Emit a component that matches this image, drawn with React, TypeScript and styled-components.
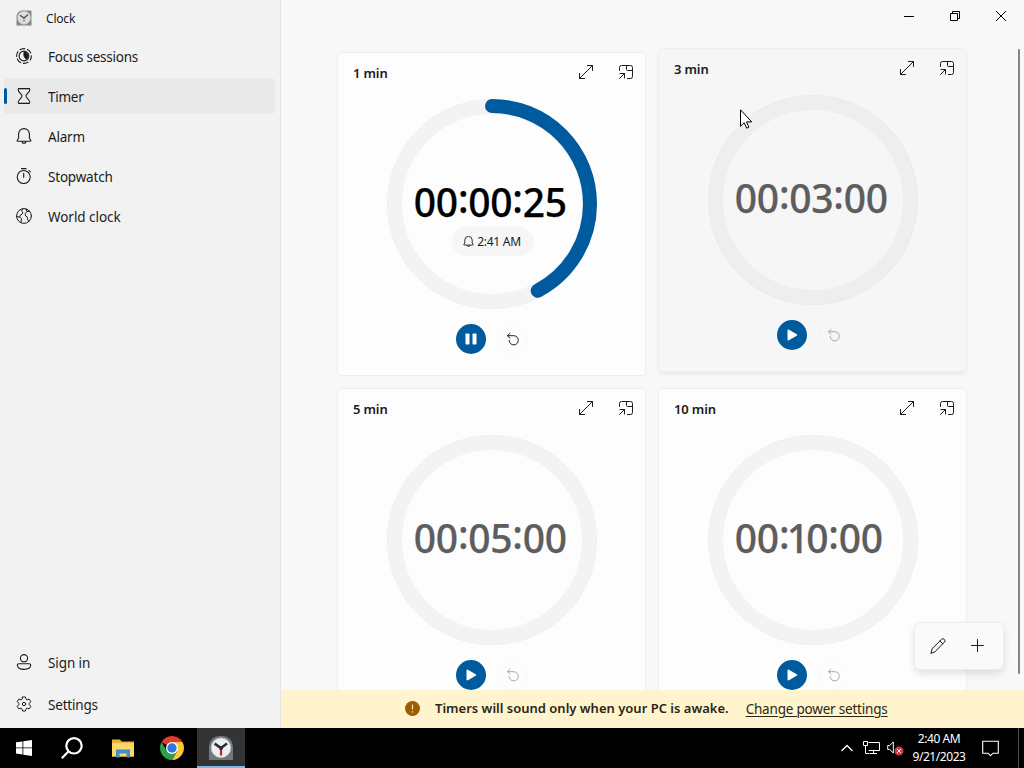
import React from 'react';
import styled, { createGlobalStyle, css } from 'styled-components';

const GlobalStyle = createGlobalStyle`
  * {
    box-sizing: border-box;
  }

  body {
    margin: 0;
    overflow: hidden;
    font-family: 'Noto Sans', 'Open Sans', sans-serif;
    color: #1b1b1b;
  }

  svg {
    display: block;
    flex: none;
  }
`;

const Desktop = styled.div`
  display: flex;
  flex-direction: column;
  width: 1024px;
  height: 768px;
`;

const Window = styled.div`
  display: flex;
  height: 728px;
  background: #f8f8f8;
`;

const Sidebar = styled.aside`
  display: flex;
  flex-direction: column;
  width: 281px;
  padding: 0 5px 6px 4px;
  background: #f2f2f2;
  border-right: 1px solid #e4e4e4;
`;

const AppTitle = styled.div`
  display: flex;
  align-items: center;
  gap: 14px;
  height: 36px;
  padding-left: 12px;
  font-size: 12px;
  letter-spacing: -0.2px;
`;

const NavList = styled.nav`
  display: flex;
  flex-direction: column;
  gap: 4px;
  padding-top: 2px;
`;

const NavFooter = styled(NavList)`
  margin-top: auto;
  gap: 6px;
`;

const NavItem = styled.a<{ $active?: boolean }>`
  display: flex;
  align-items: center;
  height: 36px;
  padding-right: 12px;
  border-radius: 4px;
  background: ${({ $active }) => ($active ? '#e9e9e9' : 'transparent')};

  &::before {
    content: '';
    width: 3px;
    height: 16px;
    margin-right: 9px;
    border-radius: 2px;
    background: ${({ $active }) => ($active ? '#005a9e' : 'transparent')};
  }
`;

const NavLabel = styled.span<{ $spacing: number }>`
  padding-top: 2px;
  margin-left: 16px;
  font-size: 13.5px;
  line-height: 20px;
  letter-spacing: ${({ $spacing }) => $spacing}px;
`;

const Main = styled.main`
  position: relative;
  display: flex;
  flex-direction: column;
  flex: 1;
`;

const TitleBar = styled.div`
  display: flex;
  justify-content: flex-end;
  height: 32px;
`;

const WindowButton = styled.div`
  display: grid;
  place-items: center;
  width: 46px;
  height: 32px;
`;

const Scroller = styled.div`
  display: flex;
  justify-content: space-between;
  height: 658px;
  padding: 17px 4px 0 57px;
  overflow: hidden;
`;

const ScrollThumb = styled.div`
  width: 2px;
  height: 625px;
  border-radius: 1px;
  background: #858585;
`;

const CardGrid = styled.div`
  display: grid;
  grid-template-columns: 307px 307px;
  grid-auto-rows: 322px;
  gap: 14px;
  padding-top: 4px;
`;

const Card = styled.section<{ $hovered?: boolean }>`
  display: flex;
  flex-direction: column;
  align-items: center;
  border-radius: 4px;
  background: #fdfdfd;
  box-shadow: 0 0 0 1px #eeeeee, 0 1px 1px #e4e4e4;

  ${({ $hovered }) =>
    $hovered &&
    css`
      background: #f6f6f6;
      box-shadow: 0 0 0 1px #efefef, 0 3px 5px rgb(0 0 0 / 0.07);
      transform: translateY(-4px);
    `}
`;

const CardHeader = styled.header`
  display: flex;
  align-items: center;
  gap: 24px;
  align-self: stretch;
  height: 46px;
  padding: 0 11px 8px 15px;
`;

const CardTitle = styled.h3`
  margin: 0 auto 0 0;
  padding-top: 2px;
  font-size: 13px;
  line-height: 20px;
  font-weight: 600;
  letter-spacing: -0.15px;
`;

const Dial = styled.div`
  display: grid;
  width: 210px;
  height: 210px;
  margin-left: 1px;

  > * {
    grid-area: 1 / 1;
  }
`;

const Face = styled.div`
  display: flex;
  flex-direction: column;
  align-items: flex-start;
  padding: 78px 0 0 27px;
`;

const Digits = styled.div<{ $running?: boolean }>`
  display: flex;
  height: 50px;
  line-height: 49px;
  font-size: 39px;
  font-weight: 500;
  color: ${({ $running }) => ($running ? '#000' : '#5d5d5d')};
  -webkit-text-stroke: 0.25px currentColor;
`;

const Digit = styled.span<{ $char: string }>`
  display: flex;
  justify-content: center;
  width: ${({ $char }) => ($char === ':' ? 10.4 : $char === '1' ? 17 : 22)}px;
  ${({ $char }) => $char === ':' && 'transform: translateY(-4px);'}
`;

const EndTime = styled.div`
  display: flex;
  align-items: center;
  justify-content: center;
  gap: 3px;
  width: 82px;
  height: 29px;
  margin-left: 38px;
  padding-right: 2px;
  border-radius: 15px;
  background: #f6f6f6;
  font-size: 12px;
  letter-spacing: -0.25px;
`;

const Controls = styled.div`
  display: flex;
  gap: 12px;
  margin: 15px 0 0 1px;
`;

const RoundButton = styled.div<{ $primary?: boolean }>`
  display: grid;
  place-items: center;
  width: 30px;
  height: 30px;
  border-radius: 50%;
  background: ${({ $primary }) => ($primary ? '#005a9e' : 'transparent')};
  border: ${({ $primary }) => ($primary ? 'none' : '1px solid rgb(0 0 0 / 0.02)')};
`;

const Toolbar = styled.div`
  position: absolute;
  right: 21px;
  bottom: 59px;
  display: flex;
  align-items: center;
  gap: 24px;
  width: 88px;
  height: 46px;
  padding-left: 15px;
  border-radius: 5px;
  background: #fafafa;
  box-shadow: 0 0 0 1px #eeeeee, 0 4px 8px rgb(0 0 0 / 0.13);
`;

const Notice = styled.div`
  display: flex;
  align-items: center;
  height: 38px;
  padding: 0 0 2px 124px;
  background: #fff4ce;
  color: #2b2614;
`;

const NoticeText = styled.strong`
  margin: 0 17px 0 15px;
  font-size: 13px;
  font-weight: 600;
  white-space: nowrap;
`;

const NoticeLink = styled.a`
  padding-top: 2px;
  font-size: 13.5px;
  letter-spacing: -0.2px;
  white-space: nowrap;
  text-decoration: underline;
  text-decoration-thickness: 1px;
  text-underline-offset: 2px;
`;

const Taskbar = styled.footer`
  display: flex;
  align-items: center;
  height: 40px;
  background: #000;
  color: #fff;
`;

const TaskButton = styled.div<{ $width: number; $active?: boolean }>`
  display: grid;
  place-items: center;
  width: ${({ $width }) => $width}px;
  height: 40px;
  background: ${({ $active }) => ($active ? '#343434' : 'transparent')};
  box-shadow: ${({ $active }) => ($active ? 'inset 0 -2px 0 #76b9ed' : 'none')};
`;

const Tray = styled.div`
  display: flex;
  align-items: center;
  margin-left: auto;
  height: 40px;
`;

const TrayClock = styled.div`
  display: flex;
  flex-direction: column;
  align-items: center;
  width: 58px;
  margin: 0 14px 0 3px;
  font-size: 12px;
  line-height: 18px;
  letter-spacing: -0.45px;
  white-space: nowrap;
`;

const ShowDesktop = styled.div`
  width: 6px;
  height: 40px;
  margin-left: 19px;
  border-left: 1px solid #4a4a4a;
`;

const ClockIcon = () => (
  <svg width="24" height="24" viewBox="0 0 24 24">
    <path d="M0 24V10.500A10.500 10.500 0 0 1 10.500 0h3A10.500 10.500 0 0 1 24 10.500V24z" fill="#70777d" />
    <circle cx="12" cy="11.800" r="9.800" fill="#eceeef" stroke="#c3c7ca" strokeWidth=".8" />
    <path d="M12 12.500v7" stroke="#b8272b" strokeWidth="2.200" />
    <path d="M5.600 7.600 12 12l6-4.400" fill="none" stroke="#2a2d30" strokeWidth="2.500" />
    <circle cx="12" cy="12" r="2" fill="#2a2d30" />
  </svg>
);

const TitleIcon = () => (
  <svg width="16" height="16" viewBox="0 0 16 16">
    <path d="M.5 15.500v-9a6 6 0 0 1 6-6h8a1 1 0 0 1 1 1v14z" fill="#858585" />
    <circle cx="8" cy="7.800" r="6.700" fill="#dedede" stroke="#aaa" strokeWidth=".6" />
    <path d="M4 5.200 8 8l4-3.200" fill="none" stroke="#444" strokeWidth="1.300" />
    <path d="M8 8v4" stroke="#8a8a8a" strokeWidth="1.200" />
  </svg>
);

const Line = ({ size = 16, color = '#1b1b1b', width = 1.1, children }: {
  size?: number;
  color?: string;
  width?: number;
  children: React.ReactNode;
}) => (
  <svg
    width={size}
    height={size}
    viewBox={`0 0 ${size} ${size}`}
    fill="none"
    stroke={color}
    strokeWidth={width}
    strokeLinecap="round"
    strokeLinejoin="round"
  >
    {children}
  </svg>
);

const FocusIcon = () => (
  <Line>
    <circle cx="8" cy="8" r="7.400" strokeDasharray="5.800 1.950" strokeDashoffset="1" strokeLinecap="butt" />
    <circle cx="8" cy="8" r="4.900" />
    <path d="M8 4.200a3.800 3.800 0 0 1 2.200 6.900L8 8z" fill="#1b1b1b" />
  </Line>
);

const HourglassIcon = () => (
  <Line>
    <path d="M3 .6h10c.6 0 .8.400.8.900 0 3.300-3.800 4.300-3.800 6.500s3.800 3.200 3.800 6.500c0 .5-.2.900-.8.900H3c-.6 0-.8-.4-.8-.9C2.200 11.200 6 10.200 6 8S2.200 4.800 2.200 1.500c0-.5.200-.9.800-.9z" />
  </Line>
);

const BellIcon = ({ size = 16 }) => (
  <svg width={size} height={size} viewBox="0 0 16 16" fill="none" stroke="#1b1b1b" strokeWidth={size < 16 ? 1.3 : 1.1} strokeLinejoin="round">
    <path d="M8 .6a5.400 5.400 0 0 0-5.400 5.400v4L1.200 12.600c-.1.300 0 .6.400.6h12.800c.4 0 .5-.3.400-.6L13.400 10V6A5.400 5.400 0 0 0 8 .6z" />
    <path d="M6 13.300a2 2 0 0 0 4 0" />
  </svg>
);

const StopwatchIcon = () => (
  <Line>
    <circle cx="7.700" cy="9" r="6.500" />
    <path d="M5.500.6h4.600M7.700 5.200v4M13 2.600l1.300 1.200" />
  </Line>
);

const GlobeIcon = () => (
  <Line width={1}>
    <circle cx="8" cy="8" r="7.400" />
    <path d="M6.500 1 5.600 3.200 7 4.500 6 6.200 4.200 7.200l-.6 2-3-.7M4 9.200l1.500 1.600-.6 3.700M13.500 3l-2.500.5-1.800 2.200.3 2.300 2 1.200.2 2.500 1 1.500M10 1l1 2.500" />
  </Line>
);

const PersonIcon = () => (
  <Line>
    <circle cx="8" cy="4.200" r="3.600" />
    <path d="M2.800 9.700h10.400c.9 0 1.500.5 1.500 1.400 0 2.500-2.700 4.300-6.700 4.300s-6.700-1.800-6.700-4.300c0-.9.600-1.400 1.500-1.400z" />
  </Line>
);

const GearIcon = () => (
  <Line width={1}>
    <circle cx="8" cy="8" r="1.700" />
    <path d="M6.500 1h3l.5 2.100 1.200.7 2.100-.6 1.500 2.500-1.600 1.600v1.400l1.600 1.600-1.500 2.500-2.100-.6-1.200.7-.5 2.100h-3L6 12.900l-1.200-.7-2.100.6-1.500-2.500 1.600-1.600V7.300L1.200 5.700l1.500-2.500 2.100.6L6 3.100z" />
  </Line>
);

const ExpandIcon = () => (
  <Line width={1}>
    <path d="M1.500 14.500l13-13M9.500 1.500h5v5M1.500 9.500v5h5" />
  </Line>
);

const CompactIcon = () => (
  <Line width={1}>
    <path d="M1.500 6.500v-3a2 2 0 0 1 2-2h9a2 2 0 0 1 2 2v9a2 2 0 0 1-2 2h-3" />
    <path d="M8.500 1.500v4a1 1 0 0 0 1 1.000h5M2 9.500h4.500v4.500M6.500 9.500l-5 5" />
  </Line>
);

const ResetIcon = ({ color }: { color: string }) => (
  <Line size={14} color={color} width={1}>
    <path d="M1.500 3.700h6.300a4.600 4.600 0 1 1-4.700 4.800M4 1.300 1.500 3.700 4 6.100" />
  </Line>
);

const PlayIcon = () => (
  <svg width="12" height="12" viewBox="0 0 12 12" fill="#fff">
    <path d="M1.500 1.600c0-.9.700-1.200 1.400-.9l7.800 4.500c.7.400.7 1.200 0 1.600l-7.800 4.500c-.7.300-1.400 0-1.400-.9z" />
  </svg>
);

const PauseIcon = () => (
  <svg width="12" height="12" viewBox="0 0 12 12" fill="#fff">
    <rect x="0.500" y="0.500" width="4" height="11" rx="0.800" />
    <rect x="7.500" y="0.500" width="4" height="11" rx="0.800" />
  </svg>
);

// the arc starts at twelve o'clock and runs clockwise
const Ring = ({ progress, track }: { progress: number; track: string }) => {
  const length = 2 * Math.PI * 98;
  return (
    <svg width="210" height="210" viewBox="0 0 210 210" fill="none">
      <circle cx="105" cy="105" r="97.500" stroke={track} strokeWidth="15" />
      <circle cx="105" cy="105" r="104.500" stroke="#000" strokeOpacity="0.02" />
      {progress > 0 && (
        <circle
          cx="105"
          cy="105"
          r="98"
          stroke="#005a9e"
          strokeWidth="14"
          strokeLinecap="round"
          strokeDasharray={`${length * progress} ${length}`}
          transform="rotate(-90 105 105)"
        />
      )}
    </svg>
  );
};

interface Timer {
  name: string;
  time: string;
  progress: number;
  endsAt?: string;
  hovered?: boolean;
}

const timers: Timer[] = [
  { name: '1 min', time: '00:00:25', progress: 0.422, endsAt: '2:41 AM' },
  { name: '3 min', time: '00:03:00', progress: 0, hovered: true },
  { name: '5 min', time: '00:05:00', progress: 0 },
  { name: '10 min', time: '00:10:00', progress: 0 },
];

const TimerCard = ({ name, time, progress, endsAt, hovered }: Timer) => (
  <Card $hovered={hovered}>
    <CardHeader>
      <CardTitle>{name}</CardTitle>
      <ExpandIcon />
      <CompactIcon />
    </CardHeader>
    <Dial>
      <Ring progress={progress} track={hovered ? '#eeeeee' : '#f3f3f3'} />
      <Face>
        <Digits $running={!!endsAt}>
          {time.split('').map((char, i) => (
            <Digit key={i} $char={char}>{char}</Digit>
          ))}
        </Digits>
        {endsAt && (
          <EndTime>
            <BellIcon size={11} />
            {endsAt}
          </EndTime>
        )}
      </Face>
    </Dial>
    <Controls>
      <RoundButton $primary>{endsAt ? <PauseIcon /> : <PlayIcon />}</RoundButton>
      <RoundButton>
        <ResetIcon color={endsAt ? '#1b1b1b' : '#a8a8a8'} />
      </RoundButton>
    </Controls>
  </Card>
);

const navItems = [
  { label: 'Focus sessions', icon: <FocusIcon />, spacing: -0.25 },
  { label: 'Timer', icon: <HourglassIcon />, spacing: -0.25, active: true },
  { label: 'Alarm', icon: <BellIcon />, spacing: -0.2 },
  { label: 'Stopwatch', icon: <StopwatchIcon />, spacing: -0.2 },
  { label: 'World clock', icon: <GlobeIcon />, spacing: -0.05 },
];

const footerItems = [
  { label: 'Sign in', icon: <PersonIcon />, spacing: -0.1 },
  { label: 'Settings', icon: <GearIcon />, spacing: -0.2 },
];

const CursorLayer = styled.div`
  position: absolute;
  left: 459px;
  top: 109px;
`;

const Cursor = () => (
  <CursorLayer>
    <svg width="13" height="20" viewBox="0 0 13 20">
      <path d="M.5.8v16.500l3.700-3.600 2.500 5.500 2.200-1-2.400-5.300h5.200z" fill="#fff" stroke="#000" />
    </svg>
  </CursorLayer>
);

const App = () => (
  <Desktop>
    <GlobalStyle />
    <Window>
      <Sidebar>
        <AppTitle>
          <TitleIcon />
          Clock
        </AppTitle>
        <NavList>
          {navItems.map(({ label, icon, spacing, active }) => (
            <NavItem key={label} $active={active}>
              {icon}
              <NavLabel $spacing={spacing}>{label}</NavLabel>
            </NavItem>
          ))}
        </NavList>
        <NavFooter>
          {footerItems.map(({ label, icon, spacing }) => (
            <NavItem key={label}>
              {icon}
              <NavLabel $spacing={spacing}>{label}</NavLabel>
            </NavItem>
          ))}
        </NavFooter>
      </Sidebar>
      <Main>
        <TitleBar>
          <WindowButton>
            <svg width="10" height="10" stroke="#000"><path d="M0 5.500h10" /></svg>
          </WindowButton>
          <WindowButton>
            <svg width="10" height="10" fill="none" stroke="#000"><path d="M.5 2.500h7v7h-7zM2.500 2.500v-2h7v7h-2" /></svg>
          </WindowButton>
          <WindowButton>
            <svg width="12" height="12" stroke="#000"><path d="M1 1l10 10M11 1 1 11" /></svg>
          </WindowButton>
        </TitleBar>
        <Scroller>
          <CardGrid>
            {timers.map((timer) => (
              <TimerCard key={timer.name} {...timer} />
            ))}
          </CardGrid>
          <ScrollThumb />
        </Scroller>
        <Notice>
          <svg width="15" height="15" viewBox="0 0 15 15">
            <circle cx="7.500" cy="7.500" r="7.500" fill="#9d5d00" />
            <path d="M7.500 3.500v5M7.500 10.200v1.200" stroke="#fff4ce" strokeWidth="1.100" />
          </svg>
          <NoticeText>Timers will sound only when your PC is awake.</NoticeText>
          <NoticeLink>Change power settings</NoticeLink>
        </Notice>
        <Toolbar>
          <Line width={1}>
            <path d="m1 15 1.200-4.400L11.500 1.400a1.900 1.900 0 0 1 2.800 0 1.900 1.900 0 0 1 0 2.800L5.200 13.600zM10 3l2.800 2.800" />
          </Line>
          <Line width={1}>
            <path d="M7.500 1.500v12M1.500 7.500h12" />
          </Line>
        </Toolbar>
        <Cursor />
      </Main>
    </Window>
    <Taskbar>
      <TaskButton $width={48}>
        <svg width="16" height="16" viewBox="0 0 16 16" fill="#fff">
          <path d="M0 2.300 6.500 1.400v6.100H0zM7.300 1.300 16 0v7.500H7.300zM0 8.300h6.500v6.200L0 13.600zM7.300 8.300H16V16l-8.700-1.300z" />
        </svg>
      </TaskButton>
      <TaskButton $width={48}>
        <svg width="22" height="22" viewBox="0 0 22 22" fill="none" stroke="#fff" strokeWidth="2.200">
          <circle cx="13" cy="8.800" r="7.700" />
          <path d="M7.700 14.200.8 21.200" />
        </svg>
      </TaskButton>
      <TaskButton $width={53}>
        <svg width="22" height="20" viewBox="0 0 22 20">
          <path d="M0 1.500h8l1.500 2H22v15H0z" fill="#e9b13b" />
          <path d="M0 5h22v13.500H0z" fill="#fcd667" />
          <path d="M4 19.500v-8h14v8h-3.500v-4h-7v4z" fill="#3f8fcb" />
        </svg>
      </TaskButton>
      <TaskButton $width={46}>
        <svg width="24" height="24" viewBox="0 0 24 24">
          <path d="M12 12 1.610 6A12 12 0 0 1 22.390 6z" fill="#e33b2e" />
          <path d="M12 12V6h10.390A12 12 0 0 1 12 24l5.200-9z" fill="#fcc934" />
          <path d="M12 12 17.200 15 12 24A12 12 0 0 1 1.610 6l5.200 9z" fill="#2da04e" />
          <circle cx="12" cy="12" r="6" fill="#fff" />
          <circle cx="12" cy="12" r="4.700" fill="#2f75e0" />
        </svg>
      </TaskButton>
      <TaskButton $width={2} />
      <TaskButton $width={48} $active>
        <ClockIcon />
      </TaskButton>
      <Tray>
        <TaskButton $width={24}>
          <svg width="12" height="8" fill="none" stroke="#fff" strokeWidth="1.300"><path d="M.5 7 6 1.500 11.500 7" /></svg>
        </TaskButton>
        <TaskButton $width={24}>
          <svg width="17" height="14" fill="none" stroke="#fff">
            <path d="M5.500 1.500h11v8h-11M.5.500h4v4h-4zM2.500 4.500v8h4M10.500 9.500v3M7 12.500h7" />
          </svg>
        </TaskButton>
        <TaskButton $width={24}>
          <svg width="17" height="16" viewBox="0 0 17 16" fill="none">
            <path d="M.7 5.500h2L6.300 2v11L2.700 9.500h-2z" stroke="#fff" />
            <circle cx="12" cy="11" r="4.500" fill="#cf3742" />
            <path d="m10 9 4 4M14 9l-4 4" stroke="#fff" />
          </svg>
        </TaskButton>
        <TrayClock>
          <span>2:40 AM</span>
          <span>9/21/2023</span>
        </TrayClock>
        <svg width="17" height="17" viewBox="0 0 17 17" fill="none" stroke="#fff" strokeWidth="1.100">
          <path d="M.7 1.200h15.600v12h-5.300l-2.500 2.500L6 13.200H.7z" />
        </svg>
        <ShowDesktop />
      </Tray>
    </Taskbar>
  </Desktop>
);

export default App;
